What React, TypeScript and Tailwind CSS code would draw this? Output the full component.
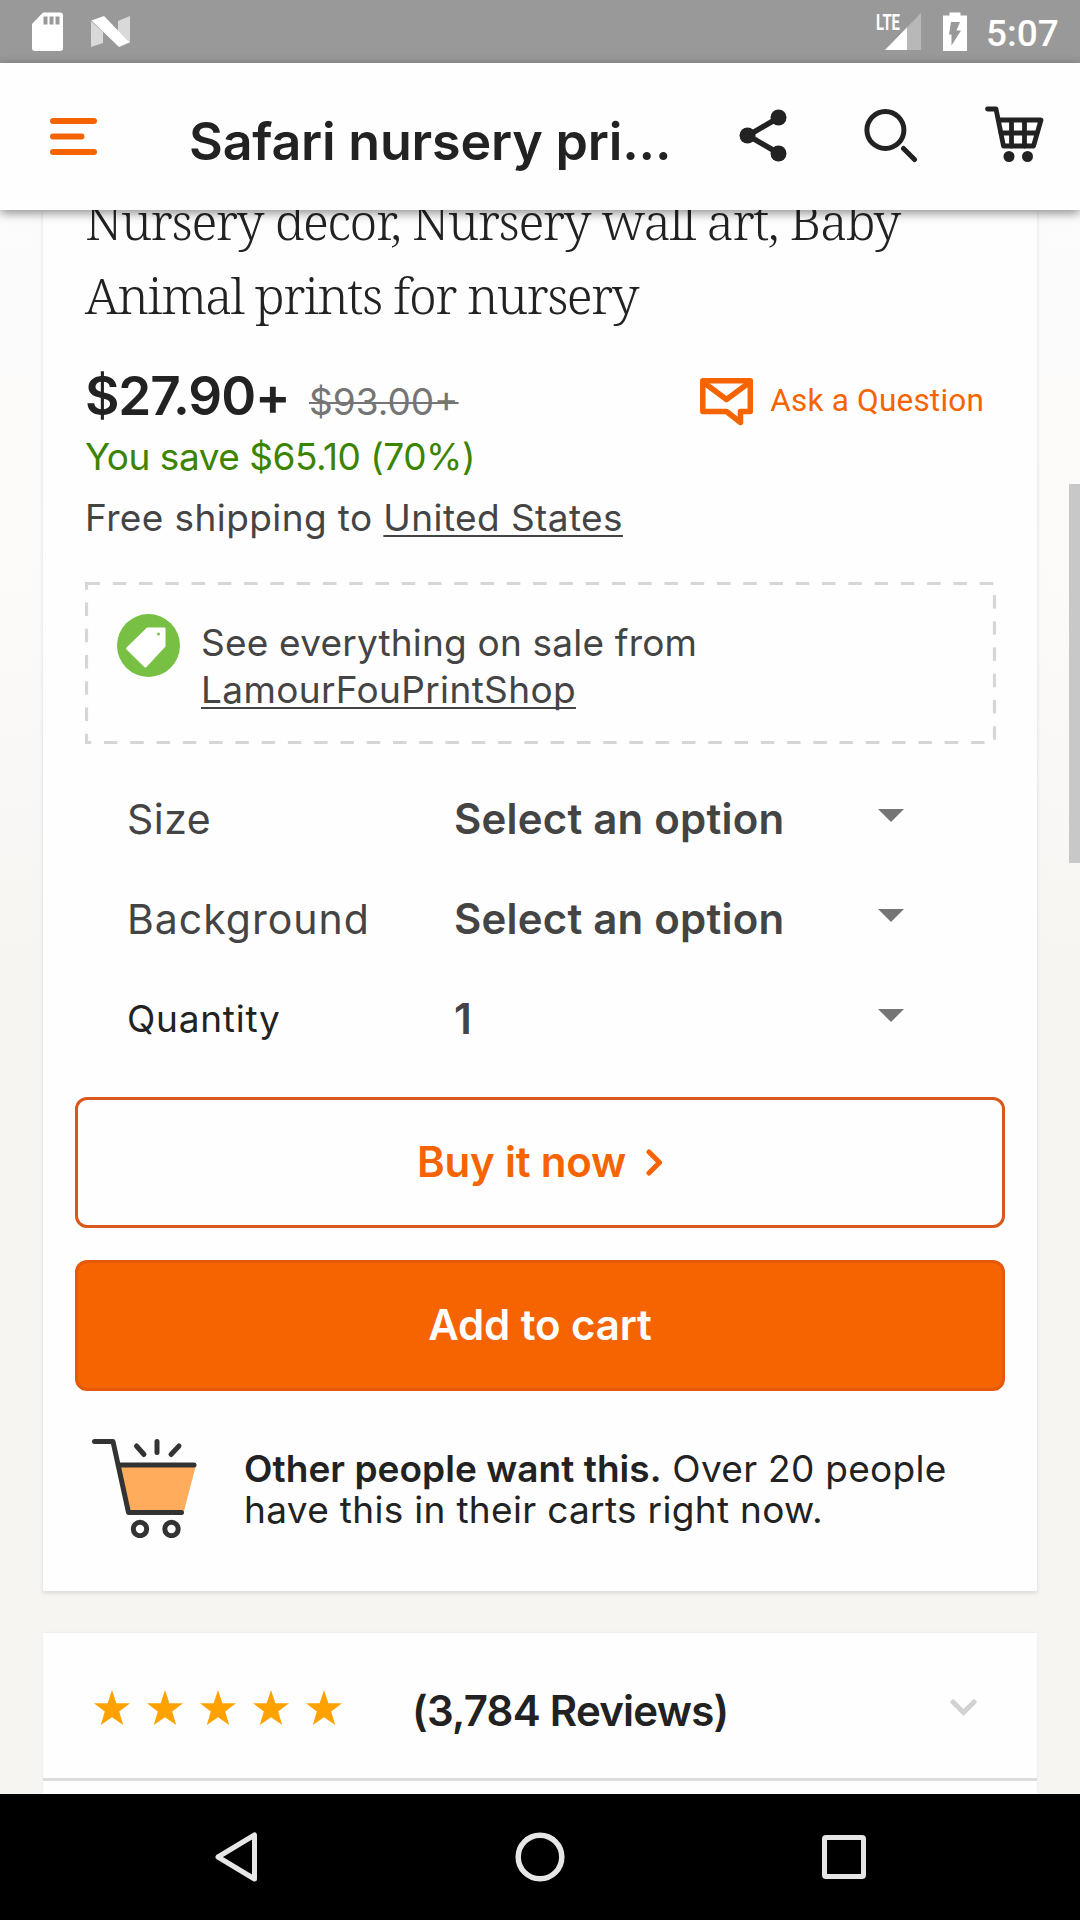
import React from "react";

const STAR = "M18 0 L22.4 13.2 H36 L25.2 21.4 L29.2 35 L18 27.2 L6.8 35 L10.8 21.4 L0 13.2 H13.6 Z";

function StatusBar() {
  return (
    <div className="flex h-[63px] shrink-0 bg-[#999999] font-[Roboto] text-white">
      <svg className="mt-[12px] ml-[32px] h-[39px] w-[31px]" viewBox="0 0 31 39">
        <path fill="#fff" d="M11 0.5H28a3 3 0 0 1 3 3V36a3 3 0 0 1-3 3H3a3 3 0 0 1-3-3V12Z" />
        <path fill="#999" d="M11.5 4.500h4v8h-4zM17.500 4.500h4v8h-4zM23.500 4.500h4v8h-4z" />
      </svg>
      <svg className="mt-[16px] ml-[28px] h-[31px] w-[39px]" viewBox="0 0 39 31">
        <path fill="#d9d9d9" d="M0 5l12 11v11L0 31ZM27 5l12-5v27L27 16Z" />
        <path fill="#fff" d="M0.500 4.500L13 0 38.500 26.500 28 31Z" />
      </svg>
      <div className="ml-auto flex">
        <svg className="mt-[12px] h-[38px] w-[46px] overflow-visible" viewBox="0 0 46 38">
          <path fill="#b8b8b8" d="M45 1V38H9Z" />
          <path fill="#fff" d="M31 15.500V38H9Z" />
          <path fill="#999" d="M0 0H25V19H0Z" />
          <text x="0" y="17.500" fill="#fff" fontFamily="Roboto" fontWeight="700" fontSize="22" textLength="24" lengthAdjust="spacingAndGlyphs">LTE</text>
        </svg>
        <svg className="mt-[12px] ml-[21px] h-[39px] w-[24px]" viewBox="0 0 24 39">
          <path fill="#fff" d="M6.500 0.500H17.500V3.500H24V39H0V3.500H6.500Z" />
          <path fill="#999" d="M8 10H17L13.500 18.500H18L8.500 33.500V22.500H6Z" />
        </svg>
        <div className="ml-[19px] w-[94px] text-[37px] leading-[67px] font-medium">5:07</div>
      </div>
    </div>
  );
}

function Header() {
  return (
    <header className="relative z-10 flex h-[147px] shrink-0 bg-[#fefefe] shadow-[0_3px_10px_rgba(0,0,0,0.45)]">
      <svg className="mt-[55px] ml-[50px] h-[37px] w-[47px]" viewBox="0 0 47 37" stroke="#f56400" strokeWidth="6" strokeLinecap="round">
        <path d="M3 3H44M3 18.500H31.500M3 34H44" />
      </svg>
      <h1 className="ml-[92px] w-[550px] text-[52px] leading-[158px] font-semibold tracking-[-0.19px] whitespace-nowrap">Safari nursery pri...</h1>
      <svg className="mt-[46px] h-[53px] w-[48px]" viewBox="0 0 48 53" fill="#222">
        <path d="M39 9L9 26.500 39 44" fill="none" stroke="#222" strokeWidth="5.500" />
        <circle cx="39.500" cy="8.500" r="8" />
        <circle cx="8.500" cy="26.500" r="8" />
        <circle cx="39.500" cy="44.500" r="8" />
      </svg>
      <svg className="mt-[45px] ml-[77px] h-[56px] w-[54px]" viewBox="0 0 54 56" fill="none" stroke="#222">
        <circle cx="21.400" cy="22" r="18.500" strokeWidth="5" />
        <path d="M39.500 40.500L50.500 51.500" strokeWidth="5" strokeLinecap="round" />
      </svg>
      <svg className="mt-[43px] ml-[67px] h-[57px] w-[59px]" viewBox="0 0 59 57" fill="none" stroke="#222" strokeWidth="4.800" strokeLinecap="round" strokeLinejoin="round">
        <path d="M2.500 3H11L18.500 40H48.500L56 14H13.500" />
        <path d="M16 27H52M26.500 15V40M39.500 15V40" />
        <circle cx="24" cy="50.500" r="5.500" fill="#222" stroke="none" />
        <circle cx="42.500" cy="50.500" r="5.500" fill="#222" stroke="none" />
      </svg>
    </header>
  );
}

function Option({ label, value, labelClass }: { label: string; value: string; labelClass: string }) {
  return (
    <div className="flex h-[100px] pl-[84px] leading-[102px]">
      <div className={"w-[327px] " + labelClass}>{label}</div>
      <div className="w-[424px] text-[42px] font-semibold tracking-[0.2px] text-[#444]">{value}</div>
      <svg className="mt-[41px] h-[13px] w-[26px]" viewBox="0 0 26 13">
        <path d="M0 0H26L13 13Z" fill="#757575" />
      </svg>
    </div>
  );
}

function SaleBox() {
  return (
    <div className="relative mt-[34px] ml-[42px] flex h-[162px] w-[911px]">
      <svg className="absolute inset-0 h-full w-full" viewBox="0 0 911 162">
        <path d="M1.500 1.500H909.500V160.500H1.500Z" fill="none" stroke="#d6d6d9" strokeWidth="3.200" strokeDasharray="13.5 12.77" />
      </svg>
      <svg className="mt-[32px] ml-[32px] h-[63px] w-[63px]" viewBox="0 0 63 63">
        <circle cx="31.500" cy="31.500" r="31.500" fill="#77c043" />
        <path d="M30 13.500H47.500a1 1 0 0 1 1 1V32.500L29.500 53a1.500 1.500 0 0 1-2.200 0L9.500 35.500a1.500 1.500 0 0 1 0-2Z" fill="#fff" />
        <circle cx="41.500" cy="20" r="1.500" fill="#77c043" />
      </svg>
      <p className="mt-[37px] ml-[21px] text-[37px] leading-[47px] tracking-[0.2px] whitespace-nowrap text-[#444]">
        See everything on sale from
        <br />
        <span className="tracking-[0.35px] underline decoration-2 underline-offset-[4px] [text-decoration-skip-ink:none]">LamourFouPrintShop</span>
      </p>
    </div>
  );
}

function ProductCard() {
  return (
    <section className="mx-[43px] h-[1381px] shrink-0 bg-[#fefefe] shadow-[0_2px_4px_rgba(0,0,0,0.12)]">
      <h2 className="mt-[-26px] pl-[42px] font-['Noto_Serif','Liberation_Serif',serif] text-[50px] leading-[74px] font-light whitespace-nowrap">
        <span className="tracking-[-1.35px]">Nursery decor, Nursery wall art, Baby</span>
        <br />
        <span className="tracking-[-1.57px]">Animal prints for nursery</span>
      </h2>
      <div className="mt-[33px] flex h-[62px] pl-[42px]">
        <div className="flex items-baseline">
          <span className="w-[224px] text-[53px] leading-[62px] font-semibold tracking-[-1.1px]">$27.90+</span>
          <span className="text-[37px] leading-[50px] tracking-[0px] text-[#757575] line-through decoration-2">$93.00+</span>
        </div>
        <div className="ml-auto flex h-[48px] pr-[53px] pt-[13px] text-[#f56400]">
          <svg className="h-[48px] w-[53px] shrink-0" viewBox="0 0 53 48" fill="none" stroke="#f56400" strokeWidth="5.500" strokeLinejoin="round">
            <path d="M2.800 2.800H50.300V33.500H40.500V44.500L26.500 33.500H2.800Z" />
            <path d="M3 4L26.500 21.500 50 4" />
          </svg>
          <span className="mt-[-1px] ml-[17px] font-[Roboto] text-[31.5px] leading-[48px] tracking-[0.2px] whitespace-nowrap">Ask a Question</span>
        </div>
      </div>
      <p className="mt-[5px] pl-[42px] text-[37px] leading-[50px] tracking-[-0.48px] text-[#3c8400]">You save $65.10 (70%)</p>
      <p className="mt-[6px] pl-[42px] text-[37px] leading-[60px] tracking-[0.4px] text-[#444]">
        Free shipping to <span className="underline decoration-2 underline-offset-[4px]">United States</span>
      </p>
      <SaleBox />
      <div className="mt-[24px]">
        <Option label="Size" value="Select an option" labelClass="text-[41px] tracking-[0.5px] text-[#444]" />
        <Option label="Background" value="Select an option" labelClass="text-[41px] tracking-[1px] text-[#444]" />
        <Option label="Quantity" value="1" labelClass="text-[37px] tracking-[0.76px] text-[#222]" />
      </div>
      <button className="mt-[29px] ml-[32px] flex h-[131px] w-[930px] justify-center rounded-[12px] border-[3px] border-[#d8591b] text-[42px] leading-[124px] font-[560] tracking-[-0.2px] text-[#f56400]">
        Buy it now
        <svg className="mt-[49px] ml-[20px] h-[27px] w-[17px]" viewBox="0 0 17 27" fill="none" stroke="#f56400" strokeWidth="5" strokeLinecap="round" strokeLinejoin="round">
          <path d="M3 3L13.500 13.500 3 24" />
        </svg>
      </button>
      <button className="mt-[32px] ml-[32px] block h-[131px] w-[930px] rounded-[12px] border-[3px] border-[#e4590a] bg-[#f56400] pb-[2px] text-[42px] leading-[122px] font-[560] tracking-[-0.1px] text-white">
        Add to cart
      </button>
      <div className="mt-[47px] flex pl-[49px]">
        <svg className="h-[100px] w-[106px] shrink-0" viewBox="0 0 106 100" fill="none" stroke="#333" strokeWidth="5" strokeLinecap="round" strokeLinejoin="round">
          <path d="M28 27H104L92 73H37Z" fill="#ffad5c" stroke="none" />
          <path d="M2.500 3.500H21L36.500 74.500H89.500M26 27H102" />
          <path d="M44.500 8L52 16.500M65 3.500V14.500M87 8L79 16.500" />
          <circle cx="48" cy="91" r="6.700" />
          <circle cx="79.500" cy="91" r="6.700" />
        </svg>
        <p className="mt-[10px] ml-[46px] text-[37px] leading-[41px] whitespace-nowrap">
          <b className="font-semibold tracking-[0.05px]">Other people want this.</b>
          <span className="tracking-[0.3px]">{" "}Over 20 people</span>
          <br />
          <span className="tracking-[0.32px]">have this in their carts right now.</span>
        </p>
      </div>
    </section>
  );
}

function ReviewsCard() {
  return (
    <section className="mx-[43px] mt-[42px] h-[161px] shrink-0 bg-[#fefefe] shadow-[0_0_3px_rgba(0,0,0,0.06)]">
      <div className="flex h-[148px] border-b-[3px] border-[#dcdcdc] pl-[51px]">
        <div className="mt-[57px] flex gap-[17px]">
          {[0, 1, 2, 3, 4].map((i) => (
            <svg key={i} className="h-[36px] w-[36px]" viewBox="0 0 36 36">
              <path d={STAR} fill="#ffa200" />
            </svg>
          ))}
        </div>
        <div className="ml-[70px] w-[538px] text-[42px] leading-[156px] font-semibold tracking-[-0.75px]">(3,784 Reviews)</div>
        <svg className="mt-[66px] h-[18px] w-[27px]" viewBox="0 0 27 18" fill="none" stroke="#d2d2d2" strokeWidth="5" strokeLinecap="round">
          <path d="M3 3L13.500 13.500 24 3" />
        </svg>
      </div>
    </section>
  );
}

function NavBar() {
  return (
    <nav className="flex h-[126px] shrink-0 items-center bg-black">
      <svg className="mt-[-1px] ml-[214px] h-[50px] w-[44px]" viewBox="0 0 44 50" fill="none" stroke="#e6e6e6" strokeWidth="5" strokeLinejoin="round">
        <path d="M40.500 3V47L4 25Z" />
      </svg>
      <svg className="ml-[257px] h-[50px] w-[50px]" viewBox="0 0 50 50" fill="none" stroke="#e6e6e6" strokeWidth="5.500">
        <circle cx="25" cy="25" r="21.800" />
      </svg>
      <svg className="ml-[257px] h-[44px] w-[44px]" viewBox="0 0 44 44" fill="none" stroke="#e6e6e6" strokeWidth="5">
        <rect x="2.500" y="2.500" width="39" height="39" rx="1.500" />
      </svg>
    </nav>
  );
}

export default function App() {
  return (
    <div className="flex h-[1920px] w-[1080px] flex-col overflow-hidden bg-black font-[Inter,sans-serif] text-[#222]">
      <StatusBar />
      <Header />
      <main className="relative flex flex-1 flex-col overflow-hidden bg-[linear-gradient(180deg,#fdfcfc_0%,#fbfaf9_25%,#f6f5f2_50%,#f6f5f2_100%)]">
        <ProductCard />
        <ReviewsCard />
        <div className="absolute top-[274px] right-0 h-[379px] w-[11px] bg-[#c8c8c8]" />
      </main>
      <NavBar />
    </div>
  );
}
